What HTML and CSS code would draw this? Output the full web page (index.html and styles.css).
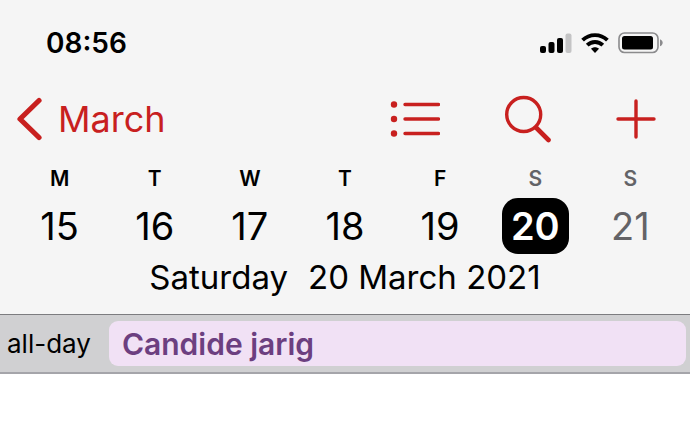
FILE: index.html
```
<!DOCTYPE html>
<html lang="en">
<head>
    <meta charset="UTF-8">
    <meta name="viewport" content="width=device-width, initial-scale=1.0">
    <title>Calendar</title>
    <link rel="stylesheet" href="styles.css">
</head>
<body>
    <header class="header">
        <div class="status-bar">
            <span class="clock">08:56</span>
            <div class="status-icons">
                <svg width="32" height="20" viewBox="0 0 32 20" aria-label="Signal">
                    <rect x="0" y="13" width="6" height="7" rx="2"/>
                    <rect x="8.5" y="9" width="6" height="11" rx="2"/>
                    <rect x="17" y="5" width="6" height="15" rx="2"/>
                    <rect x="25.5" y="0.5" width="6" height="19.5" rx="2" fill="#c4c4c5"/>
                </svg>
                <svg width="28" height="20" viewBox="0 0 28 20" fill="none" stroke="#000" stroke-width="3.8" aria-label="Wi-Fi">
                    <path d="M1.6 7.2C8.4 0.3 19.6 0.3 26.4 7.2"/>
                    <path d="M6.2 12.2C10.5 7.9 17.5 7.9 21.8 12.2"/>
                    <path d="M14 20l-4-4.2c2.3-2 5.7-2 8 0z" fill="#000" stroke="none"/>
                </svg>
                <svg width="46" height="22" viewBox="0 0 46 22" aria-label="Battery">
                    <rect x="1" y="1" width="39" height="19.5" rx="5.5" fill="none" stroke="#8b8b8d" stroke-width="1.6"/>
                    <rect x="4" y="4" width="31" height="13.5" rx="2.5"/>
                    <path d="M42 7.2c3.6 1.4 3.6 5.7 0 7.1z" fill="#8b8b8d"/>
                </svg>
            </div>
        </div>

        <nav class="toolbar">
            <button type="button" class="back">
                <svg width="26" height="44" viewBox="0 0 26 44" fill="none" stroke="currentColor" stroke-width="5.2" stroke-linecap="round" stroke-linejoin="round">
                    <path d="M23 3.5L4 22l19 18.500"/>
                </svg>
                March
            </button>
            <div class="actions">
                <button type="button" aria-label="List">
                    <svg width="50" height="48" viewBox="0 0 50 48" stroke="currentColor" stroke-width="3.4" stroke-linecap="round">
                        <g fill="currentColor" stroke="none">
                            <circle cx="4" cy="9.5" r="3.200"/>
                            <circle cx="4" cy="24" r="3.200"/>
                            <circle cx="4" cy="38.500" r="3.200"/>
                        </g>
                        <path d="M15 9.500h33.500M15 24h33.500M15 38.500h33.500"/>
                    </svg>
                </button>
                <button type="button" aria-label="Search">
                    <svg width="48" height="48" viewBox="0 0 48 48" fill="none" stroke="currentColor" stroke-linecap="round">
                        <circle cx="19.7" cy="19.5" r="17" stroke-width="3.4"/>
                        <path d="M32.500 33l12 12" stroke-width="4.600"/>
                    </svg>
                </button>
                <button type="button" aria-label="Add">
                    <svg width="40" height="48" viewBox="0 0 40 48" fill="none" stroke="currentColor" stroke-width="3.4" stroke-linecap="round">
                        <path d="M20 6v36M2 24h36"/>
                    </svg>
                </button>
            </div>
        </nav>

        <div class="week">
            <span class="weekday">M</span>
            <span class="weekday">T</span>
            <span class="weekday">W</span>
            <span class="weekday">T</span>
            <span class="weekday">F</span>
            <span class="weekday weekend">S</span>
            <span class="weekday weekend">S</span>
            <button type="button" class="day">15</button>
            <button type="button" class="day">16</button>
            <button type="button" class="day">17</button>
            <button type="button" class="day">18</button>
            <button type="button" class="day">19</button>
            <button type="button" class="day selected" aria-current="date">20</button>
            <button type="button" class="day weekend">21</button>
        </div>

        <h1 class="date-title"><span>Saturday</span> <span>20 March 2021</span></h1>
    </header>

    <main>
        <section class="all-day">
            <span class="all-day-label">all-day</span>
            <button type="button" class="event">Candide jarig</button>
        </section>
    </main>
</body>
</html>
```

FILE: styles.css
```
* {
    box-sizing: border-box;
}
body {
    margin: 0;
    font-family: Inter, "Liberation Sans", sans-serif;
    background-color: #fff;
    color: #000;
}
button {
    padding: 0;
    border: none;
    background: none;
    font-family: inherit;
    color: inherit;
    cursor: pointer;
}
svg {
    display: block;
}
.header {
    padding-top: 20px;
    background-color: #f5f5f5;
}
.status-bar {
    display: flex;
    justify-content: space-between;
    align-items: center;
    height: 46px;
    padding: 0 26px 0 46px;
}
.clock {
    font-size: 28px;
    font-weight: 600;
}
.status-icons {
    display: flex;
    align-items: center;
    gap: 9px;
}
.toolbar {
    display: flex;
    justify-content: space-between;
    align-items: center;
    margin-top: 29px;
    padding: 0 34px 0 16px;
    color: #c8201f;
}
.back {
    display: flex;
    align-items: center;
    gap: 16px;
    font-size: 36px;
    line-height: 48px;
}
.actions {
    display: flex;
    gap: 64px;
}
.week {
    display: grid;
    grid-template-columns: repeat(7, 1fr);
    justify-items: center;
    row-gap: 7px;
    margin-top: 24px;
    padding: 0 12px;
}
.weekday {
    font-size: 21px;
    font-weight: 600;
    line-height: 24px;
}
.day {
    width: 67px;
    height: 56px;
    border-radius: 16px;
    font-size: 38px;
    line-height: 54px;
}
.weekend {
    color: #636367;
}
.selected {
    background-color: #000;
    color: #fff;
    font-weight: 600;
}
.date-title {
    display: flex;
    justify-content: center;
    gap: 20px;
    margin: 0;
    padding-bottom: 14px;
    font-size: 33px;
    font-weight: 400;
    line-height: 46px;
}
.all-day {
    display: flex;
    align-items: center;
    gap: 18px;
    padding: 6px 4px 6px 7px;
    border-top: 1px solid #7c7c7f;
    border-bottom: 2px solid #a5a5aa;
    background-color: #d0d0d2;
}
.all-day-label {
    font-size: 26px;
}
.event {
    flex: 1;
    height: 45px;
    padding: 0 13px;
    border-radius: 9px;
    background-color: #f1e1f5;
    color: #6c3f80;
    font-size: 30px;
    font-weight: 600;
    text-align: left;
}
```
